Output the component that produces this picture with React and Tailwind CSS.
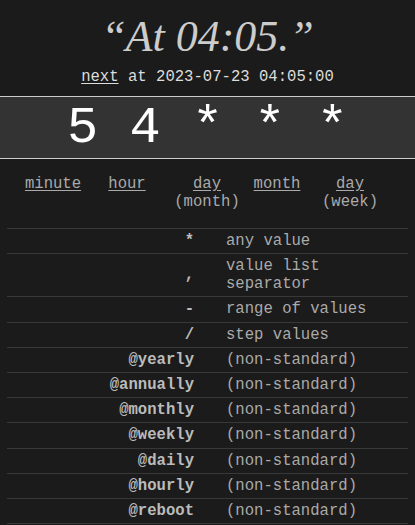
import React from "react";

const labels = [
  { w: "w-[74px]", lines: ["minute"] },
  { w: "w-[74px]", lines: ["hour"] },
  { w: "w-[86px]", lines: ["day", "(month)"] },
  { w: "w-[54px]", lines: ["month"] },
  { w: "w-[92px]", lines: ["day", "(week)"] },
];

const rows = [
  ["*", "any value"],
  [",", "value list separator"],
  ["-", "range of values"],
  ["/", "step values"],
  ["@yearly", "(non-standard)"],
  ["@annually", "(non-standard)"],
  ["@monthly", "(non-standard)"],
  ["@weekly", "(non-standard)"],
  ["@daily", "(non-standard)"],
  ["@hourly", "(non-standard)"],
  ["@reboot", "(non-standard)"],
];

export default function App() {
  return (
    <div
      className="min-h-[525px] w-full bg-[#1b1b1b] text-[#cccccc] text-[15.6px] leading-[18px]"
      style={{ fontFamily: '"Liberation Mono", "Courier New", monospace' }}
    >
      <div
        className="pt-[13px] text-center italic text-[44px] leading-[48px] text-[#cccccc]"
        style={{ fontFamily: '"Liberation Serif", Georgia, serif' }}
      >
        “At 04:05.”
      </div>
      <div className="mt-[7px] text-center text-[#dddddd]">
        <span className="underline underline-offset-2">next</span> at 2023-07-23 04:05:00
      </div>
      <div className="mt-[10px] border-y border-[#cccccc] bg-[#333333] pt-[2px] text-center text-[52px] leading-[59px] text-white">
        5 4 * * *
      </div>
      <div className="mt-[16px] flex pl-[16px] text-[#aaaaaa] leading-[18px]">
        {labels.map((l, i) => (
          <div key={i} className={`${l.w} text-center`}>
            <div className="underline underline-offset-2">{l.lines[0]}</div>
            {l.lines[1] && <div>{l.lines[1]}</div>}
          </div>
        ))}
      </div>
      <div className="mx-[7px] mt-[17px] border-b border-[#383838]">
        {rows.map(([sym, desc], i) => (
          <div key={i} className="flex items-center border-t border-[#383838] py-[3.1px]">
            <div className="w-[187px] shrink-0 text-right font-bold text-[#bbbbbb]">{sym}</div>
            <div className="flex-1 pl-[32px] pr-[10px] text-[#aaaaaa]">{desc}</div>
          </div>
        ))}
      </div>
    </div>
  );
}
